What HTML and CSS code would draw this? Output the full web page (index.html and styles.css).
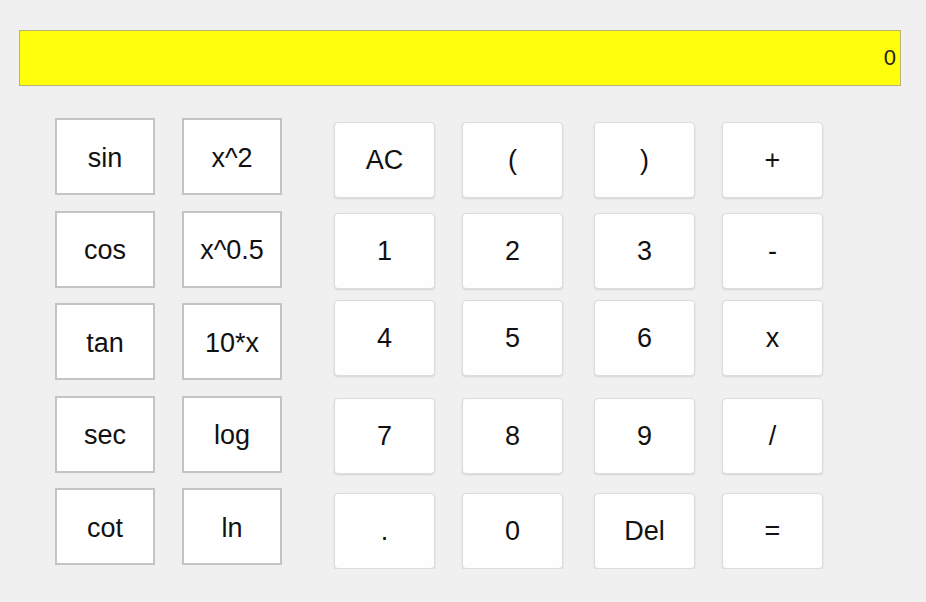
FILE: index.html
```html
<!DOCTYPE html>
<html lang="en">
<head>
  <meta charset="UTF-8">
  <title>Calculator</title>
  <link rel="stylesheet" href="styles.css">
</head>
<body>
  <div id="pantalla" class="pantalla">0</div>

  <div class="teclado">
    <div class="funciones">
      <button class="fn" onclick="funcion('sin')">sin</button>
      <button class="fn" onclick="funcion('sq')">x^2</button>
      <button class="fn" onclick="funcion('cos')">cos</button>
      <button class="fn" onclick="funcion('sqrt')">x^0.5</button>
      <button class="fn" onclick="funcion('tan')">tan</button>
      <button class="fn" onclick="funcion('pow10')">10*x</button>
      <button class="fn" onclick="funcion('sec')">sec</button>
      <button class="fn" onclick="funcion('log')">log</button>
      <button class="fn" onclick="funcion('cot')">cot</button>
      <button class="fn" onclick="funcion('ln')">ln</button>
    </div>

    <div class="numeros">
      <div class="fila">
        <button class="tecla" onclick="limpiar()">AC</button>
        <button class="tecla" onclick="poner('(')">(</button>
        <button class="tecla" onclick="poner(')')">)</button>
        <button class="tecla" onclick="poner('+')">+</button>
      </div>
      <div class="fila f2">
        <button class="tecla" onclick="poner('1')">1</button>
        <button class="tecla" onclick="poner('2')">2</button>
        <button class="tecla" onclick="poner('3')">3</button>
        <button class="tecla" onclick="poner('-')">-</button>
      </div>
      <div class="fila f3">
        <button class="tecla" onclick="poner('4')">4</button>
        <button class="tecla" onclick="poner('5')">5</button>
        <button class="tecla" onclick="poner('6')">6</button>
        <button class="tecla" onclick="poner('*')">x</button>
      </div>
      <div class="fila f4">
        <button class="tecla" onclick="poner('7')">7</button>
        <button class="tecla" onclick="poner('8')">8</button>
        <button class="tecla" onclick="poner('9')">9</button>
        <button class="tecla" onclick="poner('/')">/</button>
      </div>
      <div class="fila f5">
        <button class="tecla" onclick="poner('.')">.</button>
        <button class="tecla" onclick="poner('0')">0</button>
        <button class="tecla" onclick="borrar()">Del</button>
        <button class="tecla" onclick="calcular()">=</button>
      </div>
    </div>
  </div>

  <script>
    let expr = '';

    function mostrar() {
      document.getElementById('pantalla').textContent = expr === '' ? '0' : expr;
    }

    function poner(c) { expr += c; mostrar(); }
    function limpiar() { expr = ''; mostrar(); }
    function borrar() { expr = expr.slice(0, -1); mostrar(); }

    function calcular() {
      try {
        expr = String(Function('return (' + expr + ')')());
      } catch (e) {
        expr = 'Error';
      }
      mostrar();
    }

    function funcion(f) {
      calcular();
      let x = parseFloat(expr) || 0;
      const ops = {
        sin: Math.sin(x), cos: Math.cos(x), tan: Math.tan(x),
        sec: 1 / Math.cos(x), cot: 1 / Math.tan(x),
        sq: x * x, sqrt: Math.sqrt(x), pow10: 10 * x,
        log: Math.log10(x), ln: Math.log(x)
      };
      expr = String(ops[f]);
      mostrar();
    }
  </script>
</body>
</html>
```

FILE: styles.css
```css
body { margin: 0; background: #f0f0f0; font-family: "Liberation Sans", Arial, sans-serif; }

.pantalla {
  box-sizing: border-box;
  width: 882px; height: 56px;
  margin: 30px 0 0 19px;
  padding: 0 4px 1px;
  background: #ffff0c;
  border: 1px solid #b4b47a;
  display: flex; align-items: center; justify-content: flex-end;
  font-size: 22px; color: #222;
}

.teclado { display: flex; margin: 32px 0 0 55px; }

.funciones {
  display: grid;
  grid-template-columns: 100px 100px;
  grid-auto-rows: 77px;
  column-gap: 27px; row-gap: 15.5px;
}

.fn {
  box-sizing: border-box;
  background: #fff;
  border: 2px solid #c4c4c4;
  border-radius: 0;
  font-family: inherit; font-size: 27px; color: #111;
  padding: 3px 0 0; cursor: pointer;
}

.numeros { margin: 4px 0 0 52px; }
.fila { display: flex; gap: 27px; }
.fila .tecla:nth-child(3) { margin-left: 4px; }
.f2 { margin-top: 15px; }
.f3 { margin-top: 11px; }
.f4 { margin-top: 22px; }
.f5 { margin-top: 19px; }

.tecla {
  box-sizing: border-box;
  width: 101px; height: 76px;
  background: #fefefe;
  border: 1px solid #dcdcdc;
  border-radius: 4px;
  box-shadow: 0 1px 2px rgba(0, 0, 0, 0.12);
  font-family: inherit; font-size: 27px; color: #111;
  padding: 0; cursor: pointer;
}
```
